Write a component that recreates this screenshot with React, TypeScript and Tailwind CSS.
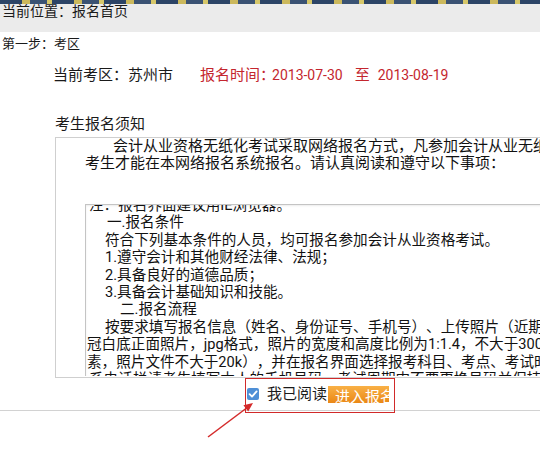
const innerLines: { text: string; indent: string }[] = [
  { text: "注：报名界面建议用IE浏览器。", indent: "pl-[3px]" },
  { text: "一.报名条件", indent: "pl-[21px]" },
  { text: "符合下列基本条件的人员，均可报名参加会计从业资格考试。", indent: "pl-[19px]" },
  { text: "1.遵守会计和其他财经法律、法规；", indent: "pl-[19px]" },
  { text: "2.具备良好的道德品质；", indent: "pl-[19px]" },
  { text: "3.具备会计基础知识和技能。", indent: "pl-[19px]" },
  { text: "二.报名流程", indent: "pl-[34px]" },
  { text: "按要求填写报名信息（姓名、身份证号、手机号）、上传照片（近期一寸免", indent: "pl-[19px]" },
  { text: "冠白底正面照片，jpg格式，照片的宽度和高度比例为1:1.4，不大于300*420像", indent: "pl-[1px]" },
  { text: "素，照片文件不大于20k），并在报名界面选择报考科目、考点、考试时间，联", indent: "pl-[1px]" },
  { text: "系电话栏请考生填写本人的手机号码，考试周期内不要更换号码并保持畅通。", indent: "pl-[3px]" },
];

function CheckIcon() {
  return (
    <svg width="12" height="12" viewBox="0 0 12 12">
      <rect x="0" y="0" width="12" height="12" rx="2" fill="#4f8fd6" />
      <path d="M2.6 6.2 L5 8.6 L9.6 3.4" stroke="#fff" strokeWidth="1.8" fill="none" strokeLinecap="round" strokeLinejoin="round" />
    </svg>
  );
}

export default function App() {
  return (
    <div className="relative w-[540px] h-[458px] overflow-hidden bg-white text-[#1a1a1a] [font-family:Roboto,'Noto_Sans_CJK_SC',sans-serif] [text-spacing-trim:space-all]">
      <div className="h-[4px] bg-[repeating-linear-gradient(90deg,#2c4466_0px,#2c4466_22px,#cbb85c_22px,#cbb85c_30px,#3a5273_30px,#3a5273_47px,#d6c76a_47px,#d6c76a_52px)]" />
      <div className="h-[28px] bg-[#ebebeb] pl-[2px] text-[14px] leading-[14px] whitespace-nowrap">当前位置：报名首页</div>

      <div className="mt-[2px] pl-[2px] text-[13px] leading-[20px]">第一步：考区</div>

      <div className="mt-[11px] pl-[53px] flex items-center text-[15px] leading-[20px] whitespace-nowrap">
        <span>当前考区：苏州市</span>
        <span className="ml-[27px] flex items-center text-[#c4262e]">
          <span>报名时间：</span>
          <span className="text-[14px] ml-[-3px]">2013-07-30</span>
          <span className="ml-[12px]">至</span>
          <span className="text-[14px] ml-[8px]">2013-08-19</span>
        </span>
      </div>

      <div className="mt-[29px] pl-[55px] text-[15px] leading-[20px]">考生报名须知</div>

      <div className="mt-[3px] ml-[55px] w-[620px] border border-[#cfcfcf] pl-[29px] pb-[1px]">
        <div className="text-[15px] leading-[17px] whitespace-nowrap text-[#111]">
          <div className="pl-[28px]">会计从业资格无纸化考试采取网络报名方式，凡参加会计从业无纸化考试的</div>
          <div>考生才能在本网络报名系统报名。请认真阅读和遵守以下事项：</div>
        </div>
        <div className="mt-[32px] h-[172px] overflow-hidden border-t border-l border-[#c4c4c4] shadow-[inset_0_1px_2px_rgba(0,0,0,0.08)]">
          <div className="-mt-[8px] text-[14.6px] leading-[17.4px] whitespace-nowrap text-[#111]">
            {innerLines.map((l, i) => (
              <div key={i} className={l.indent}>
                {l.text}
              </div>
            ))}
          </div>
        </div>
      </div>

      <div className="h-[33px] pl-[247px] flex items-center border-b border-[#d2d2d2]">
        <CheckIcon />
        <span className="ml-[8px] text-[15px] leading-[20px]">我已阅读</span>
        <div className="ml-[1px] w-[61px] h-[17px] overflow-hidden bg-[linear-gradient(#f9b146,#ea8716)] pl-[7px] text-white text-[15px] leading-[22px] whitespace-nowrap">
          进入报名
        </div>
      </div>

      <div className="absolute left-[245px] top-[378px] w-[150px] h-[35px] border border-[#d12a2a]" />
      <svg className="absolute left-[200px] top-[398px]" width="60" height="45" viewBox="0 0 60 45">
        <line x1="8" y1="39" x2="48" y2="9" stroke="#d42a2a" strokeWidth="1.5" />
        <polygon points="53,5 48.2,13.6 43.4,7.2" fill="#d42a2a" />
      </svg>
    </div>
  );
}
